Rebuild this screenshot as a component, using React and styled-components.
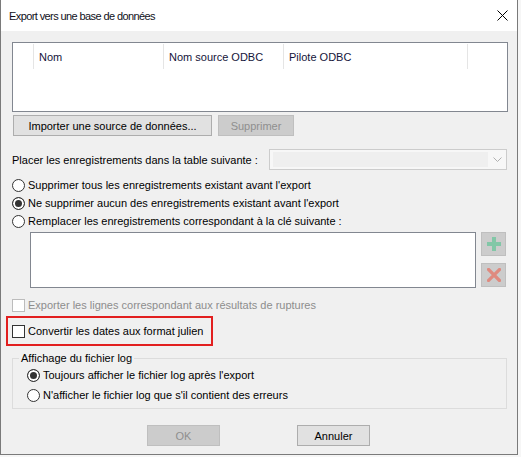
import React from 'react';
import styled, { createGlobalStyle } from 'styled-components';

const GlobalStyle = createGlobalStyle`
  html, body {
    margin: 0;
    padding: 0;
    background: #f6f6f6;
  }
  body {
    font-family: "Liberation Sans", Arial, sans-serif;
    font-size: 11px;
    color: #000;
  }
`;

const Window = styled.div`
  width: 518px;
  height: 455px;
  box-sizing: border-box;
  border: 1px solid #7a7a7a;
  border-top: none;
  background: #f0f0f0;
  display: flex;
  flex-direction: column;
`;

const TitleBar = styled.div`
  height: 31px;
  flex-shrink: 0;
  background: #fff;
  display: flex;
  align-items: center;
  justify-content: space-between;
  padding: 0 9px 0 8px;
  box-sizing: border-box;
`;

const Title = styled.span`
  font-size: 11px;
  letter-spacing: -0.6px;
  color: #10101a;
`;

const Body = styled.div`
  flex: 1;
  padding: 11px 0 0 11px;
  display: flex;
  flex-direction: column;
  align-items: flex-start;
`;

const ListView = styled.div`
  width: 496px;
  height: 70px;
  box-sizing: border-box;
  border: 1px solid #828790;
  background: #fff;
`;

const HeaderRow = styled.div`
  display: flex;
  height: 25px;
  margin-top: 1px;
`;

const HeaderCell = styled.div`
  width: ${p => p.$w}px;
  box-sizing: border-box;
  border-right: 1px solid #e5e5e5;
  padding-left: 5px;
  display: flex;
  align-items: center;
  color: #14143a;
`;

const Row = styled.div`
  display: flex;
  align-items: center;
  gap: ${p => p.$gap || 0}px;
  margin-top: ${p => p.$mt || 0}px;
  margin-left: ${p => p.$ml || 0}px;
`;

const Button = styled.div`
  width: ${p => p.$w}px;
  height: 21px;
  box-sizing: border-box;
  border: 1px solid ${p => (p.$disabled ? '#bfbfbf' : '#adadad')};
  background: ${p => (p.$disabled ? '#cccccc' : '#e1e1e1')};
  color: ${p => (p.$disabled ? '#8f8f8f' : '#000')};
  display: flex;
  align-items: center;
  justify-content: center;
`;

const Label = styled.span`
  color: ${p => (p.$disabled ? '#8d8d8d' : '#000')};
  white-space: nowrap;
`;

const FieldLabel = styled(Label)`
  width: 257px;
`;

const Combo = styled.div`
  width: 238px;
  height: 21px;
  box-sizing: border-box;
  border: 1px solid #cccccc;
  background: #f7f7f7;
  display: flex;
  align-items: center;
  padding: 0 0 0 3px;
`;

const ComboField = styled.div`
  width: 215px;
  height: 15px;
  background: #efefef;
`;

const ComboArrow = styled.div`
  flex: 1;
  display: flex;
  align-items: center;
  justify-content: center;
`;

const OptionRow = styled.label`
  display: flex;
  align-items: center;
  height: 18px;
  gap: 3px;
  margin-top: ${p => p.$mt || 0}px;
  margin-left: ${p => p.$ml || 0}px;
`;

const RadioCircle = styled.span`
  width: 13px;
  height: 13px;
  box-sizing: border-box;
  border: 1px solid #333;
  border-radius: 50%;
  background: ${p => (p.$checked ? '#333' : '#fff')};
  box-shadow: inset 0 0 0 2px #fff;
  flex-shrink: 0;
`;

const CheckBox = styled.span`
  width: 13px;
  height: 13px;
  box-sizing: border-box;
  border: 1px solid ${p => (p.$disabled ? '#bcbcbc' : '#333')};
  background: #fff;
  flex-shrink: 0;
`;

const KeyArea = styled.div`
  display: flex;
  gap: 5px;
  margin-top: 2px;
  margin-left: 18px;
`;

const KeyList = styled.div`
  width: 446px;
  height: 56px;
  box-sizing: border-box;
  border: 1px solid #828790;
  background: #fff;
`;

const SideButtons = styled.div`
  display: flex;
  flex-direction: column;
  gap: 7px;
`;

const IconButton = styled.div`
  width: 25px;
  height: 24px;
  box-sizing: border-box;
  border: 1px solid #bfbfbf;
  background: #cccccc;
  display: flex;
  align-items: center;
  justify-content: center;
`;

const Highlight = styled.div`
  width: 207px;
  height: 30px;
  box-sizing: border-box;
  border: 2px solid #e21f1f;
  margin: 2px 0 0 -6px;
  padding-left: 4px;
  display: flex;
  align-items: center;
`;

const GroupBox = styled.fieldset`
  width: 495px;
  box-sizing: border-box;
  margin: 4px 0 0 0;
  padding: 0 0 4px 0;
  min-width: 0;
  border: 1px solid #dcdcdc;
`;

const GroupLegend = styled.legend`
  margin-left: 6px;
  padding: 0 2px;
  line-height: 16px;
`;

const Footer = styled.div`
  width: 515px;
  margin: 16px 0 0 -11px;
  display: flex;
  justify-content: center;
  gap: 77px;
`;

const CloseIcon = () => (
  <svg width="11" height="11" viewBox="0 0 11 11">
    <path d="M0.5 0.5 L10.5 10.5 M10.5 0.5 L0.5 10.5" stroke="#000" strokeWidth="1" />
  </svg>
);

const Chevron = () => (
  <svg width="9" height="5" viewBox="0 0 9 5">
    <path d="M0.5 0.5 L4.5 4.5 L8.5 0.5" fill="none" stroke="#b0b0b0" strokeWidth="1" />
  </svg>
);

const PlusIcon = () => (
  <svg width="14" height="14" viewBox="0 0 14 14">
    <path d="M5 0 H9 V5 H14 V9 H9 V14 H5 V9 H0 V5 H5 Z" fill="#82c7a7" />
  </svg>
);

const CrossIcon = () => (
  <svg width="14" height="14" viewBox="0 0 14 14">
    <path d="M1.5 1.5 L12.5 12.5 M12.5 1.5 L1.5 12.5" stroke="#df8a7f" strokeWidth="3.2" strokeLinecap="square" />
  </svg>
);

const columns = [
  { w: 21, label: '' },
  { w: 130, label: 'Nom' },
  { w: 120, label: 'Nom source ODBC' },
  { w: 184, label: 'Pilote ODBC' },
];

const Radio = ({ checked, children, mt, ml }) => (
  <OptionRow $mt={mt} $ml={ml}>
    <RadioCircle $checked={checked} />
    <Label>{children}</Label>
  </OptionRow>
);

const App = () => {
  return (
    <>
      <GlobalStyle />
      <Window>
        <TitleBar>
          <Title>Export vers une base de données</Title>
          <CloseIcon />
        </TitleBar>
        <Body>
          <ListView>
            <HeaderRow>
              {columns.map((c, i) => (
                <HeaderCell key={i} $w={c.w}>{c.label}</HeaderCell>
              ))}
            </HeaderRow>
          </ListView>

          <Row $mt={3} $ml={1} $gap={6}>
            <Button $w={199}>Importer une source de données...</Button>
            <Button $w={76} $disabled>Supprimer</Button>
          </Row>

          <Row $mt={13}>
            <FieldLabel>Placer les enregistrements dans la table suivante :</FieldLabel>
            <Combo>
              <ComboField />
              <ComboArrow><Chevron /></ComboArrow>
            </Combo>
          </Row>

          <Radio mt={6}>Supprimer tous les enregistrements existant avant l'export</Radio>
          <Radio checked>Ne supprimer aucun des enregistrements existant avant l'export</Radio>
          <Radio>Remplacer les enregistrements correspondant à la clé suivante :</Radio>

          <KeyArea>
            <KeyList />
            <SideButtons>
              <IconButton><PlusIcon /></IconButton>
              <IconButton><CrossIcon /></IconButton>
            </SideButtons>
          </KeyArea>

          <OptionRow $mt={8}>
            <CheckBox $disabled />
            <Label $disabled>Exporter les lignes correspondant aux résultats de ruptures</Label>
          </OptionRow>

          <Highlight>
            <OptionRow>
              <CheckBox />
              <Label>Convertir les dates aux format julien</Label>
            </OptionRow>
          </Highlight>

          <GroupBox>
            <GroupLegend>Affichage du fichier log</GroupLegend>
            <Radio checked ml={14}>Toujours afficher le fichier log après l'export</Radio>
            <Radio ml={14} mt={2}>N'afficher le fichier log que s'il contient des erreurs</Radio>
          </GroupBox>

          <Footer>
            <Button $w={73} $disabled>OK</Button>
            <Button $w={73}>Annuler</Button>
          </Footer>
        </Body>
      </Window>
    </>
  );
};

export default App;
